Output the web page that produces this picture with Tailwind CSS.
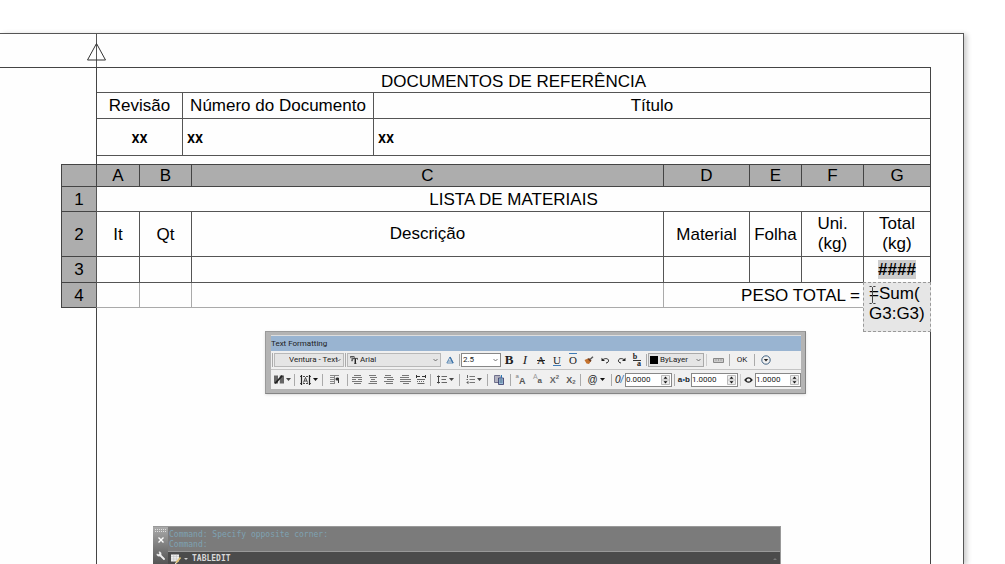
<!DOCTYPE html>
<html lang="pt-BR">
<head>
  <meta charset="UTF-8">
  <meta name="viewport" content="width=device-width, initial-scale=1.0">
  <title>Lista de Materiais</title>
  <script src="https://cdn.jsdelivr.net/npm/@tailwindcss/browser@4"></script>
</head>
<body class="relative flex h-screen flex-col overflow-hidden bg-white pt-[33px] pr-[41px] font-['Liberation_Sans',Arial,sans-serif] text-[17px] leading-5 text-black">

  <!-- Drawing sheet -->
  <main class="flex grow flex-col border-t border-r border-[#555] bg-[#fefefe] shadow-[3px_1px_5px_rgba(0,0,0,0.2)]">
    <div class="mr-8 flex h-[34px] shrink-0 border-b border-[#444] pl-24">
      <div class="relative border-l border-[#555]">
        <svg class="absolute top-2 -left-[11px] h-5 w-5" viewBox="0 0 20 20" fill="none" stroke="#333"><path d="M10.5 1.5 L19.5 18 H1.5 Z"/></svg>
      </div>
    </div>

    <div class="mr-8 ml-24 grow border-x border-[#444]">
      <table class="w-full table-fixed border-separate border-spacing-0 text-center">
        <colgroup><col class="w-[85px]"><col class="w-[191px]"><col></colgroup>
        <thead>
          <tr class="h-[25px]"><th colspan="3" class="border-b border-[#555] p-0 pt-1 font-normal">DOCUMENTOS DE REFERÊNCIA</th></tr>
          <tr class="h-[26px]">
            <th class="border-b border-[#555] p-0 font-normal">Revisão</th>
            <th class="border-b border-l border-[#555] p-0 font-normal whitespace-nowrap">Número do Documento</th>
            <th class="border-b border-l border-[#555] p-0 font-normal">Título</th>
          </tr>
        </thead>
        <tbody class="font-['Roboto',sans-serif] text-base leading-5 font-medium">
          <tr class="h-[37px]">
            <td class="border-b border-[#555] p-0 pt-0.5">xx</td>
            <td class="border-b border-l border-[#555] p-0 pt-0.5 pl-1 text-left">xx</td>
            <td class="border-b border-l border-[#555] p-0 pt-0.5 pl-1 text-left">xx</td>
          </tr>
        </tbody>
      </table>

      <div class="relative mt-2 -mr-px -ml-9">
        <table class="w-full table-fixed border-separate border-spacing-0 border-t border-r border-[#444] text-center">
          <colgroup>
            <col class="w-[35px]"><col class="w-[43px]"><col class="w-[52px]"><col><col class="w-[86px]"><col class="w-[52px]"><col class="w-[62px]"><col class="w-[67px]">
          </colgroup>
          <thead>
            <tr class="h-[22px] bg-[#adadad]">
              <th class="border-b border-l border-[#444] p-0"></th>
              <th class="border-b border-l border-[#444] p-0 font-normal">A</th>
              <th class="border-b border-l border-[#444] p-0 font-normal">B</th>
              <th class="border-b border-l border-[#444] p-0 font-normal">C</th>
              <th class="border-b border-l border-[#444] p-0 font-normal">D</th>
              <th class="border-b border-l border-[#444] p-0 font-normal">E</th>
              <th class="border-b border-l border-[#444] p-0 font-normal">F</th>
              <th class="border-b border-l border-[#444] p-0 font-normal">G</th>
            </tr>
          </thead>
          <tbody>
            <tr class="h-[25px]">
              <th class="border-b border-l border-[#444] bg-[#adadad] p-0 pt-px font-normal">1</th>
              <td colspan="7" class="border-b border-l border-[#555] p-0 pt-px">LISTA DE MATERIAIS</td>
            </tr>
            <tr class="h-[45px]">
              <th class="border-b border-l border-[#444] bg-[#adadad] p-0 pt-px font-normal">2</th>
              <td class="border-b border-l border-[#555] p-0 pt-px">It</td>
              <td class="border-b border-l border-[#555] p-0 pt-px">Qt</td>
              <td class="border-b border-l border-[#555] p-0">Descrição</td>
              <td class="border-b border-l border-[#555] p-0 pt-px">Material</td>
              <td class="border-b border-l border-[#555] p-0 pt-px">Folha</td>
              <td class="border-b border-l border-[#555] p-0">Uni.<br>(kg)</td>
              <td class="border-b border-l border-[#555] p-0">Total<br>(kg)</td>
            </tr>
            <tr class="h-[26px]">
              <th class="border-b border-l border-[#444] bg-[#adadad] p-0 font-normal">3</th>
              <td class="border-b border-l border-[#555] p-0"></td>
              <td class="border-b border-l border-[#555] p-0"></td>
              <td class="border-b border-l border-[#555] p-0"></td>
              <td class="border-b border-l border-[#555] p-0"></td>
              <td class="border-b border-l border-[#555] p-0"></td>
              <td class="border-b border-l border-[#555] p-0"></td>
              <td class="border-b border-l border-[#555] p-0"><span class="bg-[#cdcdcd] font-bold">####</span></td>
            </tr>
            <tr class="h-[25px]">
              <th class="border-b border-l border-[#444] bg-[#adadad] p-0 pt-px font-normal">4</th>
              <td class="border-b border-l border-[#aaa] border-l-[#555] p-0"></td>
              <td class="border-b border-l border-[#aaa] p-0"></td>
              <td class="border-b border-l border-[#aaa] p-0"></td>
              <td colspan="3" class="border-b border-l border-[#aaa] p-0 pt-px pr-[3px] text-right">PESO TOTAL =</td>
              <td class="p-0"></td>
            </tr>
          </tbody>
        </table>

        <!-- In-place formula editor over G4 -->
        <div class="absolute right-0 -bottom-6 h-[50px] w-[68px]">
          <textarea aria-label="G4" class="block h-full w-full resize-none overflow-hidden border border-dashed border-[#999] bg-[#e6e6e6] py-px pl-[5px] whitespace-pre outline-none">
=Sum(
G3:G3)</textarea>
          <svg class="absolute top-1 left-1.5 h-[18px] w-[7px]" viewBox="0 0 7 18" fill="none" stroke="#444"><path d="M0.5 0.5 H2.5 L3.5 1.5 L4.5 0.5 H6.5 M3.5 1.5 V16.5 M0.5 17.5 H2.5 L3.5 16.5 L4.5 17.5 H6.5"/></svg>
        </div>
      </div>
    </div>
  </main>

  <!-- Text Formatting floating toolbar -->
  <section class="absolute top-[331px] left-[265px] w-[541px] border border-[#9a9a9a] border-r-[#858585] border-b-[#858585] bg-[#b4b4b4] p-1 pl-[5px] pt-[3px] font-['Roboto',sans-serif] text-[8px] leading-3 text-[#222] shadow-sm">
    <div class="border-t border-[#ddd] bg-[#f0f0f0]">
      <h2 class="h-[15px] bg-[#99b4d1] leading-[15px]">Text Formatting</h2>

      <div class="flex h-[19px] items-center border-b border-[#c4c4c4]">
        <i class="mx-px h-3.5 w-px shrink-0 bg-[#aaa]"></i>
        <div class="relative w-[70px] shrink-0">
          <select aria-label="Style" class="block h-3.5 w-full appearance-none border border-[#b8b8b8] bg-[#e5e5e5] pl-3.5"><option>Ventura - Text</option></select>
          <svg class="pointer-events-none absolute top-[5px] right-[3px] h-1 w-[5px]" viewBox="0 0 5 4" fill="none" stroke="#555" stroke-width="0.8"><path d="M0.5 1 L2.5 3 L4.5 1"/></svg>
        </div>
        <i class="mx-px h-3.5 w-px shrink-0 bg-[#aaa]"></i>
        <div class="relative w-[94px] shrink-0">
          <select aria-label="Font" class="block h-3.5 w-full appearance-none border border-[#b8b8b8] bg-[#e5e5e5] pl-3"><option>Arial</option></select>
          <svg class="pointer-events-none absolute top-[3px] left-[3px] h-2 w-2" viewBox="0 0 8 8" fill="none" stroke="#222"><path d="M0.3 2.2 V0.5 H4.2 V2 M2 0.5 V4.5 M1.2 4.7 H3" stroke-width="0.7"/><path d="M2.8 3.8 V2.4 H7.7 V3.8 M4.3 7.5 H6.4" stroke-width="0.8"/><path d="M5.3 2.4 V7.5" stroke-width="1.4"/></svg>
          <svg class="pointer-events-none absolute top-[5px] right-[3px] h-1 w-[5px]" viewBox="0 0 5 4" fill="none" stroke="#555" stroke-width="0.8"><path d="M0.5 1 L2.5 3 L4.5 1"/></svg>
        </div>
        <button aria-label="Annotative" class="flex w-[17px] shrink-0 justify-center"><svg class="h-2 w-2" viewBox="0 0 8 8" fill="none" stroke="#3d73a8"><path d="M0.8 7 L4 1 L7.2 7 Z M2 5 H6" stroke-width="0.8"/><path d="M4 1 L7 7" stroke-width="1.3"/></svg></button>
        <i class="mx-px h-3 w-px shrink-0 bg-[#aaa]"></i>
        <div class="relative w-10 shrink-0">
          <select aria-label="Height" class="block h-3.5 w-full appearance-none border border-[#888] bg-white pl-px"><option>2.5</option></select>
          <svg class="pointer-events-none absolute top-[5px] right-[3px] h-1 w-[5px]" viewBox="0 0 5 4" fill="none" stroke="#555" stroke-width="0.8"><path d="M0.5 1 L2.5 3 L4.5 1"/></svg>
        </div>
        <button aria-label="Bold" class="w-4 shrink-0 font-['Liberation_Serif',serif] text-[13px] font-bold">B</button>
        <button aria-label="Italic" class="w-4 shrink-0 font-['Liberation_Serif',serif] text-[13px] italic">I</button>
        <button aria-label="Strikethrough" class="w-4 shrink-0 font-['Liberation_Serif',serif] text-[11px] line-through">A</button>
        <button aria-label="Underline" class="w-4 shrink-0 font-['Liberation_Serif',serif] text-[11px] underline decoration-[#3d7ab5]">U</button>
        <button aria-label="Overline" class="w-4 shrink-0 font-['Liberation_Serif',serif] text-[11px] overline decoration-[#3d7ab5]">O</button>
        <button aria-label="Match" class="flex w-4 shrink-0 justify-center"><svg class="h-[9px] w-2.5" viewBox="0 0 10 9"><path d="M0.5 4 L4 2.5 L7 5 L5 8 L2.5 7.5 Z" fill="#c4722e"/><path d="M3.5 3 L5 2 L7.5 4.5 L6.5 6 Z" fill="#6b3a20"/><path d="M6 3.5 L9 0.8" stroke="#555" stroke-width="1.4"/></svg></button>
        <button aria-label="Undo" class="flex w-4 shrink-0 justify-center"><svg class="h-[7px] w-[9px]" viewBox="0 0 9 7" fill="none" stroke="#222"><path d="M1.5 3 C4 0.8 7 1.4 7.5 3.2 C7.9 4.8 6.5 5.8 5 6"/><path d="M0.5 0.8 V4 H4 Z" fill="#222" stroke="none"/></svg></button>
        <button aria-label="Redo" class="flex w-4 shrink-0 justify-center"><svg class="h-[7px] w-[9px]" viewBox="0 0 9 7" fill="none" stroke="#222"><path d="M7.5 3 C5 0.8 2 1.4 1.5 3.2 C1.1 4.8 2.5 5.8 4 6"/><path d="M8.5 0.8 V4 H5 Z" fill="#222" stroke="none"/></svg></button>
        <button aria-label="Stack" class="flex w-4 shrink-0 flex-col items-center font-['Liberation_Serif',serif] text-[8px] leading-[6px] font-bold"><span class="pr-1">b</span><span class="border-t border-[#333] pl-1">a</span></button>
        <i class="mx-px h-3 w-px shrink-0 bg-[#aaa]"></i>
        <div class="relative mr-px w-14 shrink-0">
          <select aria-label="Color" class="block h-3.5 w-full appearance-none border border-[#aaa] bg-[#e5e5e5] pl-[11px]"><option>ByLayer</option></select>
          <span class="pointer-events-none absolute top-[3px] left-[2px] h-2 w-2 bg-black"></span>
          <svg class="pointer-events-none absolute top-[5px] right-[3px] h-1 w-[5px]" viewBox="0 0 5 4" fill="none" stroke="#555" stroke-width="0.8"><path d="M0.5 1 L2.5 3 L4.5 1"/></svg>
        </div>
        <i class="mx-px h-3 w-px shrink-0 bg-[#ccc]"></i>
        <button aria-label="Ruler" class="flex w-5 shrink-0 justify-center"><svg class="h-[5px] w-[11px]" viewBox="0 0 11 5"><path d="M0.5 0.5 H10.5 V4.5 H0.5 Z" fill="#ccc" stroke="#888"/><path d="M3 1 V3 M5.5 1 V3 M8 1 V3" stroke="#888" stroke-width="0.6"/></svg></button>
        <i class="mx-px h-3 w-px shrink-0 bg-[#aaa]"></i>
        <button class="w-[22px] shrink-0">OK</button>
        <i class="mx-px h-3 w-px shrink-0 bg-[#aaa]"></i>
        <button aria-label="Options" class="flex w-5 shrink-0 justify-center"><svg class="h-2.5 w-2.5" viewBox="0 0 10 10" fill="none"><circle cx="5" cy="5" r="4.2" stroke="#2f5578" stroke-width="0.9"/><path d="M2.8 4 L5 6.4 L7.2 4 Z" fill="#222"/></svg></button>
      </div>

      <div class="flex h-[19px] items-center">
        <button aria-label="Columns" class="flex w-[22px] shrink-0 items-center justify-center gap-0.5"><svg class="h-[9px] w-2.5" viewBox="0 0 9 8"><path d="M0 0.5 H3.6 V7.5 H0 Z M5.2 0.5 H9 V7.5 H5.2 Z" fill="#666"/><path d="M1 7.5 L7.5 0.5" stroke="#222" stroke-width="1.4"/></svg><svg class="h-[3px] w-[5px]" viewBox="0 0 5 3"><path d="M0 0 H5 L2.5 3 Z" fill="#444"/></svg></button>
        <i class="mx-px h-3 w-px shrink-0 bg-[#aaa]"></i>
        <button aria-label="MText Justification" class="flex w-[25px] shrink-0 items-center justify-center gap-0.5"><svg class="h-2.5 w-[11px]" viewBox="0 0 11 10" fill="none" stroke="#222"><path d="M1.5 0 V10 M9.5 0 V10" stroke-width="1.2"/><path d="M0 1.5 H11 M0 8.5 H11" stroke-width="0.8" stroke-dasharray="2 1"/><path d="M3.5 7.5 L5.5 2.5 L7.5 7.5 M4.3 6 H6.7" stroke-width="0.8"/></svg><svg class="h-[3px] w-[5px]" viewBox="0 0 5 3"><path d="M0 0 H5 L2.5 3 Z" fill="#111"/></svg></button>
        <i class="mx-px h-3 w-px shrink-0 bg-[#aaa]"></i>
        <button aria-label="Paragraph" class="flex w-[22px] shrink-0 justify-center"><svg class="h-[9px] w-2.5" viewBox="0 0 10 9" fill="none" stroke="#888"><path d="M0 0.5 H9 M0 2.5 H4 M0 4.5 H4 M0 6.5 H4 M0 8.5 H4"/><path d="M4.5 1 V9"/><path d="M8.5 3 V8" stroke="#333"/><path d="M8.5 2.5 H7 A1.5 1.5 0 0 0 7 5.5 H8.5 Z" fill="#333" stroke="none"/></svg></button>
        <i class="mx-px h-3 w-px shrink-0 bg-[#aaa]"></i>
        <button aria-label="Left" class="flex w-4 shrink-0 justify-center"><svg class="h-[9px] w-2.5" viewBox="0 0 10 9" stroke="#777"><path d="M2 0.5 H9 M0 2.5 H10 M0 4.5 H4 M6 4.5 H10 M0 6.5 H10 M2 8.5 H9"/></svg></button>
        <button aria-label="Center" class="flex w-4 shrink-0 justify-center"><svg class="h-[9px] w-2.5" viewBox="0 0 10 9" stroke="#777"><path d="M1 0.5 H8 M2 2.5 H9 M3 4.5 H7 M2 6.5 H9 M0.5 8.5 H9"/></svg></button>
        <button aria-label="Right" class="flex w-4 shrink-0 justify-center"><svg class="h-[9px] w-2.5" viewBox="0 0 10 9" stroke="#777"><path d="M1 0.5 H7 M0 2.5 H9 M3 4.5 H10 M0 6.5 H9 M2 8.5 H9"/></svg></button>
        <button aria-label="Justify" class="flex w-4 shrink-0 justify-center"><svg class="h-[9px] w-[11px]" viewBox="0 0 11 9" stroke="#777"><path d="M2 0.5 H9 M0 2.5 H9 M0 4.5 H11 M0 6.5 H11 M3 8.5 H9"/></svg></button>
        <button aria-label="Distribute" class="flex w-4 shrink-0 justify-center"><svg class="h-[9px] w-2.5" viewBox="0 0 10 9" fill="none" stroke="#666"><path d="M0.5 0 V3 M9.5 0 V3 M1 1.5 H4 M6 1.5 H9" stroke="#333"/><path d="M1 4.5 H9 M1.5 8.5 H8.5"/><path d="M1 6.5 H9" stroke-dasharray="1 1"/></svg></button>
        <i class="mx-px h-3 w-px shrink-0 bg-[#aaa]"></i>
        <button aria-label="Line Spacing" class="flex w-[26px] shrink-0 items-center justify-center gap-0.5"><svg class="h-[9px] w-2.5" viewBox="0 0 10 9" fill="none" stroke="#666"><path d="M1.5 0.5 V8.5 M0 1.5 H3 M0 7.5 H3" stroke="#444"/><path d="M4.5 1.5 H10 M4.5 4.5 H9 M4.5 7.5 H10"/></svg><svg class="h-[3px] w-[5px]" viewBox="0 0 5 3"><path d="M0 0 H5 L2.5 3 Z" fill="#444"/></svg></button>
        <i class="mx-px h-3 w-px shrink-0 bg-[#aaa]"></i>
        <button aria-label="Numbering" class="flex w-[25px] shrink-0 items-center justify-center gap-0.5"><svg class="h-[9px] w-[9px]" viewBox="0 0 9 9" fill="none" stroke="#777"><path d="M1.5 0 V3 M0.5 4.5 H2 M0.5 7.5 H2 M2 6 V9" stroke="#555" stroke-width="0.9"/><path d="M3.5 1.5 H9 M3.5 4.5 H9 M3.5 7.5 H9"/></svg><svg class="h-[3px] w-[5px]" viewBox="0 0 5 3"><path d="M0 0 H5 L2.5 3 Z" fill="#444"/></svg></button>
        <i class="mx-px h-3 w-px shrink-0 bg-[#aaa]"></i>
        <button aria-label="Insert Field" class="flex w-5 shrink-0 justify-center"><svg class="h-2.5 w-2.5" viewBox="0 0 10 10" fill="none"><path d="M0.5 0.5 H6 V7.5 H0.5 Z M2 0.5 V7.5 M4 0.5 V7.5" stroke="#557" stroke-width="0.8"/><path d="M4.5 3 H9.5 V9.5 H4.5 Z" fill="#9dbfd8" stroke="#336" stroke-width="0.8"/><path d="M5.5 5 H8.5 M5.5 7 H8.5" stroke="#246" stroke-width="0.7"/><path d="M7.5 0 V3" stroke="#2a7ab8"/></svg></button>
        <i class="mx-px h-3 w-px shrink-0 bg-[#aaa]"></i>
        <button aria-label="Uppercase" class="flex w-[17px] shrink-0 justify-center font-['Liberation_Sans',sans-serif]"><span class="text-[6px] leading-[6px] text-[#777]">a</span><span class="pt-0.5 text-[9px] font-bold text-[#555]">A</span></button>
        <button aria-label="Lowercase" class="flex w-[17px] shrink-0 justify-center font-['Liberation_Sans',sans-serif]"><span class="text-[7px] leading-[7px] text-[#999]">A</span><span class="pt-0.5 text-[8px] font-bold text-[#555]">a</span></button>
        <button aria-label="Superscript" class="flex w-[17px] shrink-0 justify-center font-['Liberation_Sans',sans-serif]"><span class="text-[9px] font-bold text-[#666]">X</span><span class="text-[6px] leading-[7px] font-bold text-[#666]">2</span></button>
        <button aria-label="Subscript" class="flex w-4 shrink-0 items-end justify-center font-['Liberation_Sans',sans-serif]"><span class="text-[9px] font-bold text-[#555]">X</span><span class="text-[6px] leading-[7px] font-bold text-[#666]">2</span></button>
        <i class="mx-px h-3 w-px shrink-0 bg-[#aaa]"></i>
        <button aria-label="Symbol" class="flex w-7 shrink-0 items-center justify-center gap-0.5 font-['Liberation_Sans',sans-serif] text-[10px]">@<svg class="h-[3px] w-[5px]" viewBox="0 0 5 3"><path d="M0 0 H5 L2.5 3 Z" fill="#111"/></svg></button>
        <i class="mx-px h-3 w-px shrink-0 bg-[#aaa]"></i>

        <label for="oblique" class="w-3 shrink-0 pl-0.5 font-['Liberation_Sans',sans-serif] text-[10px] whitespace-nowrap italic">0<span class="text-[#2a6fb0]">/</span></label>
        <div class="mr-px flex h-3.5 w-[47px] shrink-0 items-center border border-[#888] bg-white pr-px">
          <input id="oblique" type="text" value="0.0000" class="w-full min-w-0 outline-none">
          <svg class="h-2.5 w-[9px] shrink-0" viewBox="0 0 9 10"><path d="M0.5 0.5 H8.5 V9.5 H0.5 Z M0.5 5 H8.5" fill="#eee" stroke="#bbb"/><path d="M2.5 3.8 L4.5 1.6 L6.5 3.8 Z M2.5 6.2 L4.5 8.4 L6.5 6.2 Z" fill="#111"/></svg>
        </div>
        <i class="mx-px h-3 w-px shrink-0 bg-[#aaa]"></i>
        <label for="tracking" class="w-[15px] shrink-0 pr-px text-right font-['Liberation_Sans',sans-serif] text-[8px] font-bold whitespace-nowrap">a<span class="text-[#2a6fb0]">•</span>b</label>
        <div class="mr-px flex h-3.5 w-[47px] shrink-0 items-center border border-[#888] bg-white pr-px">
          <input id="tracking" type="text" value="1.0000" class="w-full min-w-0 outline-none">
          <svg class="h-2.5 w-[9px] shrink-0" viewBox="0 0 9 10"><path d="M0.5 0.5 H8.5 V9.5 H0.5 Z M0.5 5 H8.5" fill="#eee" stroke="#bbb"/><path d="M2.5 3.8 L4.5 1.6 L6.5 3.8 Z M2.5 6.2 L4.5 8.4 L6.5 6.2 Z" fill="#111"/></svg>
        </div>
        <i class="mx-px h-3 w-px shrink-0 bg-[#ccc]"></i>
        <label for="widthfactor" aria-label="Width Factor" class="flex w-[13px] shrink-0 justify-center"><svg class="h-1.5 w-[9px]" viewBox="0 0 9 6"><ellipse cx="4.5" cy="3" rx="2.6" ry="2.1" fill="none" stroke="#222" stroke-width="1.1"/><path d="M0 3 L2.2 1.2 V4.8 Z M9 3 L6.8 1.2 V4.8 Z" fill="#222"/></svg></label>
        <div class="flex h-3.5 w-[46px] shrink-0 items-center border border-[#888] bg-white pr-px">
          <input id="widthfactor" type="text" value="1.0000" class="w-full min-w-0 outline-none">
          <svg class="h-2.5 w-[9px] shrink-0" viewBox="0 0 9 10"><path d="M0.5 0.5 H8.5 V9.5 H0.5 Z M0.5 5 H8.5" fill="#eee" stroke="#bbb"/><path d="M2.5 3.8 L4.5 1.6 L6.5 3.8 Z M2.5 6.2 L4.5 8.4 L6.5 6.2 Z" fill="#111"/></svg>
        </div>
      </div>
    </div>
  </section>

  <!-- Command line window -->
  <section class="absolute bottom-0 left-[153px] flex h-[38px] w-[628px] border-t border-r border-[#999] bg-[#7b7b7b] font-['DejaVu_Sans_Mono',monospace] text-[8px] leading-2.5">
    <div class="flex w-[15px] shrink-0 flex-col items-center gap-1 bg-linear-to-b from-[#aaa] to-[#555] pt-0.5">
      <svg class="h-1 w-[11px]" viewBox="0 0 11 4" stroke="#ddd"><path d="M0 0.5 H11 M0 2.5 H11" stroke-dasharray="1 1"/></svg>
      <button aria-label="Close" class="mb-1 flex"><svg class="h-1.5 w-1.5" viewBox="0 0 6 6" stroke="#fff" stroke-width="1.4"><path d="M0.5 0.5 L5.5 5.5 M5.5 0.5 L0.5 5.5"/></svg></button>
      <button aria-label="Customize" class="flex"><svg class="h-[9px] w-[9px]" viewBox="0 0 9 9" fill="none" stroke="#eee"><path d="M4.5 4.5 L8 8" stroke-width="1.8" stroke-linecap="round"/><path d="M3 0.8 A2.2 2.2 0 1 1 0.8 3 L2.6 3.6 L3.6 2.6 Z" fill="#eee" stroke-width="0.6"/></svg></button>
    </div>
    <div class="flex grow flex-col">
      <div class="h-6 pt-[3px] pl-px text-[#7ea2b2]">
        <p>Command: Specify opposite corner:</p>
        <p>Command:</p>
      </div>
      <div class="flex grow items-center border-t border-[#999] bg-[#4b4b4b] px-[3px] pt-px">
        <button aria-label="Recent Commands" class="mr-1 flex shrink-0 items-center gap-0.5"><svg class="h-2.5 w-[11px]" viewBox="0 0 11 10"><path d="M0 0.5 H8 V7.5 H0 Z" fill="#eee"/><path d="M0 2.5 H8 M0 5 H8 M2.7 0.5 V7.5 M5.4 0.5 V7.5" stroke="#bbb" stroke-width="0.5"/><path d="M5 9 L9.5 3.5" stroke="#e0c070" stroke-width="1.8"/><path d="M4.2 10 L5.6 8.6" stroke="#fff"/></svg><svg class="h-0.5 w-1" viewBox="0 0 4 2"><path d="M0 0 H4 L2 2 Z" fill="#ccc"/></svg></button>
        <input aria-label="Command" type="text" value="TABLEDIT" class="min-w-0 grow font-bold text-[#d8d8d8] outline-none">
        <svg class="h-0.5 w-1 shrink-0" viewBox="0 0 4 2"><path d="M0 2 H4 L2 0 Z" fill="#777"/></svg>
      </div>
    </div>
  </section>
</body>
</html>
